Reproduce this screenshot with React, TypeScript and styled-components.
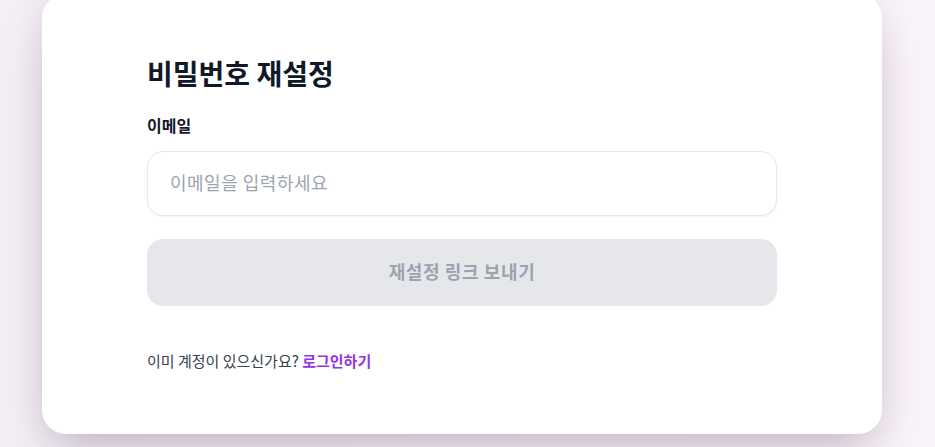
import React from "react";
import styled, { createGlobalStyle } from "styled-components";

const Global = createGlobalStyle`
  html, body {
    margin: 0;
    padding: 0;
  }
  body {
    background: linear-gradient(90deg, #f4eef5 0%, #f8f2f8 50%, #faf3fa 100%);
    font-family: "Noto Sans CJK KR", "Noto Sans", sans-serif;
    overflow: hidden;
  }
  * { box-sizing: border-box; }
`;

const Page = styled.div`
  width: 935px;
  height: 447px;
  padding-left: 42px;
  overflow: hidden;
`;

const Card = styled.div`
  width: 840px;
  margin-top: -6px;
  background: #ffffff;
  border-radius: 24px;
  padding: 62px 105px 63px;
  box-shadow: 0 25px 50px -12px rgba(40, 20, 50, 0.25), 0 0 30px rgba(120, 80, 130, 0.08);
  display: flex;
  flex-direction: column;
`;

const Title = styled.h1`
  margin: 0 0 25px;
  font-size: 28px;
  line-height: 34px;
  font-weight: 700;
  color: #111827;
`;

const Label = styled.label`
  font-size: 16px;
  line-height: 20px;
  font-weight: 700;
  color: #111827;
  margin-bottom: 16px;
`;

const Input = styled.input`
  height: 65px;
  width: 100%;
  border: 1px solid #e5e7eb;
  border-radius: 16px;
  padding: 0 22px 3px;
  font-family: inherit;
  font-size: 18px;
  letter-spacing: 0.5px;
  color: #111827;
  background: #fff;
  box-shadow: 0 1px 2px rgba(0, 0, 0, 0.05);
  outline: none;
  &::placeholder {
    color: #9ca3af;
  }
`;

const Button = styled.button`
  margin-top: 23px;
  height: 67px;
  width: 100%;
  border: none;
  border-radius: 16px;
  padding: 0 0 3px;
  background: #e5e7eb;
  color: #9ca3af;
  font-family: inherit;
  font-size: 18px;
  letter-spacing: 0.6px;
  font-weight: 700;
  cursor: not-allowed;
`;

const Footer = styled.p`
  margin: 45px 0 0;
  font-size: 15px;
  line-height: 20px;
  color: #374151;
`;

const Link = styled.a`
  color: #9333ea;
  font-weight: 700;
  text-decoration: none;
`;

export default function App() {
  return (
    <>
      <Global />
      <Page>
        <Card>
          <Title>비밀번호 재설정</Title>
          <Label htmlFor="email">이메일</Label>
          <Input id="email" type="email" placeholder="이메일을 입력하세요" />
          <Button disabled>재설정 링크 보내기</Button>
          <Footer>
            이미 계정이 있으신가요? <Link href="#">로그인하기</Link>
          </Footer>
        </Card>
      </Page>
    </>
  );
}
